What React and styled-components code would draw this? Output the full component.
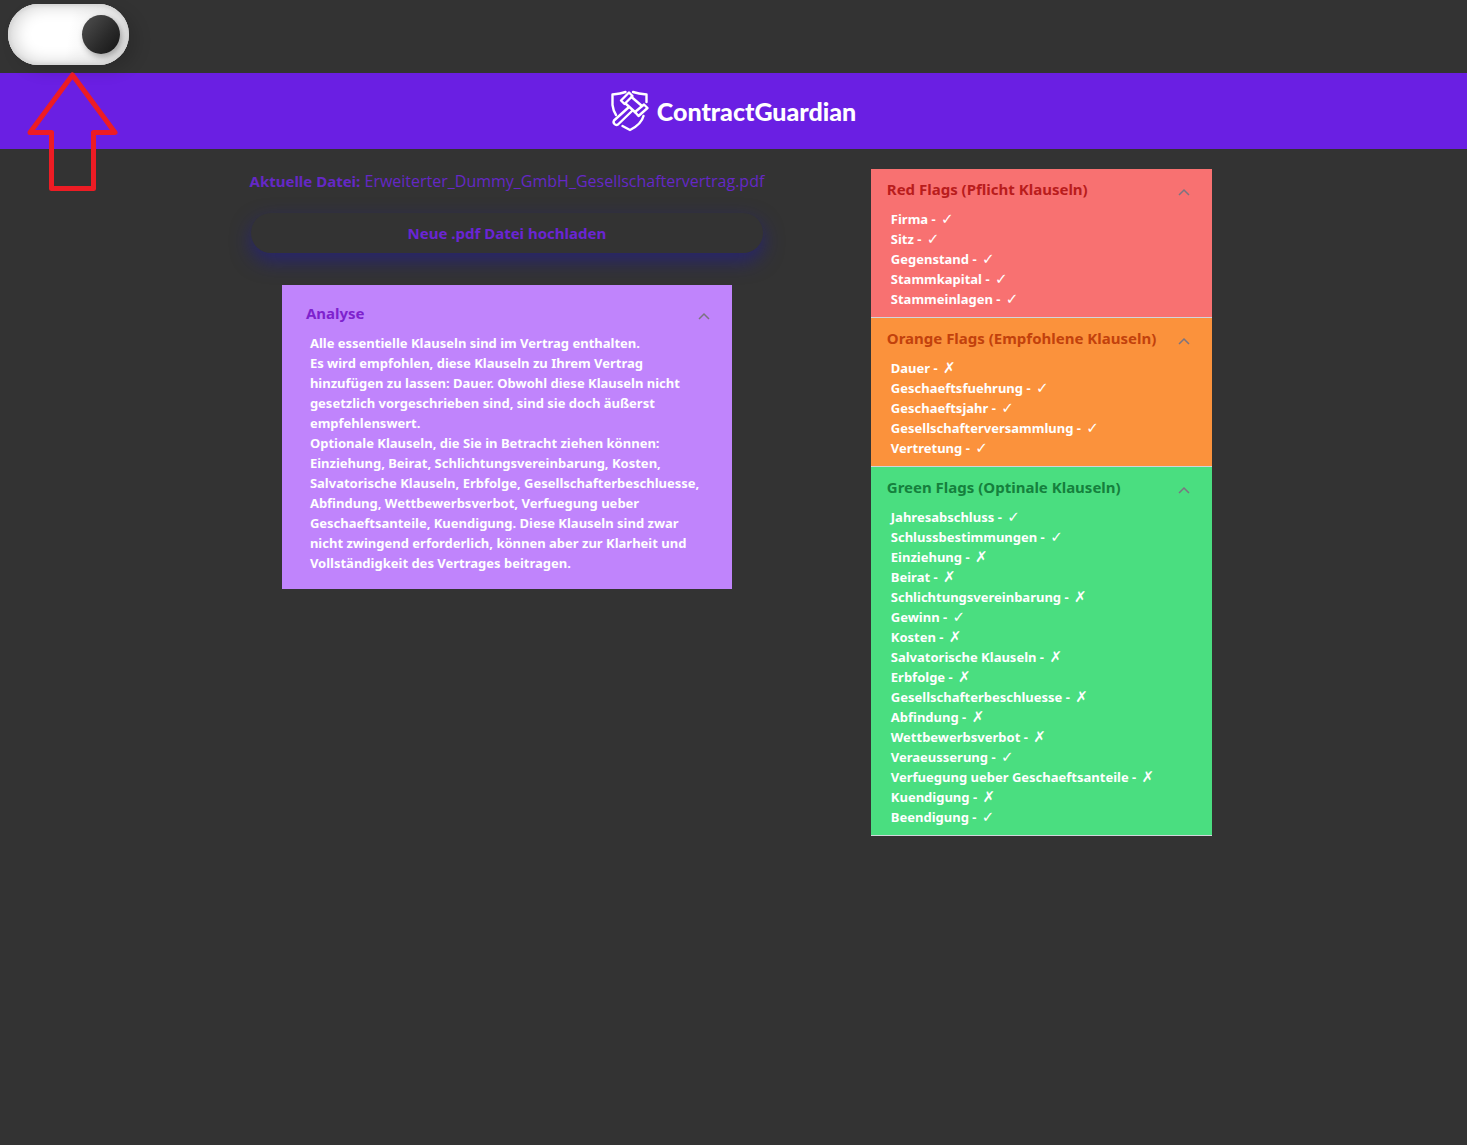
import React, { useState } from "react";
import styled, { createGlobalStyle } from "styled-components";

const GlobalStyle = createGlobalStyle`
  * { box-sizing: border-box; }
  body {
    margin: 0;
    background: #333333;
    font-family: "Noto Sans", "Open Sans", "DejaVu Sans", sans-serif;
  }
`;

const Page = styled.div`
  position: relative;
  min-height: 100vh;
  background: #333333;
`;

const TopBar = styled.div`
  display: flex;
  height: 73px;
  padding: 4px 8px;
`;

const Switch = styled.label`
  position: relative;
  display: block;
  width: 121px;
  height: 61px;
  border-radius: 31px;
  cursor: pointer;
  background: linear-gradient(100deg, #ffffff 50%, #e2e2e2 100%);
  box-shadow:
    inset 0 0 3px 2px #d6d6d6,
    inset 4px 0 16px 3px #d8d8d8,
    8px 6px 16px rgba(0, 0, 0, 0.14);
`;

const SwitchInput = styled.input`
  appearance: none;
  position: absolute;
  top: 11px;
  left: ${(p) => (p.checked ? "74px" : "10px")};
  width: 38px;
  height: 39px;
  margin: 0;
  border-radius: 50%;
  cursor: pointer;
  background: linear-gradient(130deg, #444444 20%, #2a2a2a 60%, #141414 100%);
  box-shadow: 2px 3px 6px rgba(0, 0, 0, 0.3);
`;

const Pointer = styled.svg`
  position: absolute;
  top: 70px;
  left: 26px;
  pointer-events: none;
`;

const Header = styled.header`
  display: flex;
  align-items: center;
  justify-content: center;
  gap: 8px;
  height: 76px;
  background: #6a1fe3;
  color: #ffffff;
`;

const Brand = styled.span`
  font-family: Lato, "Open Sans", sans-serif;
  font-size: 25px;
  font-weight: 900;
  line-height: 32px;
`;

const Main = styled.main`
  display: grid;
  grid-template-columns: minmax(0, 3fr) minmax(0, 2fr);
  gap: 108px;
  align-items: start;
  max-width: 965px;
  margin: 0 auto;
  padding: 20px 4px 20px 0;
`;

const Left = styled.section`
  display: flex;
  flex-direction: column;
  align-items: center;
`;

const FileName = styled.p`
  margin: 0;
  font-family: "Open Sans", sans-serif;
  font-size: 16px;
  line-height: 24px;
  color: #6528c6;
  white-space: nowrap;
`;

const FileLabel = styled.b`
  font-family: "Noto Sans", sans-serif;
  font-size: 15px;
`;

const Upload = styled.button`
  width: 100%;
  height: 40px;
  margin: 20px 0 32px;
  border: 0;
  border-radius: 20px;
  background: #333333;
  color: #6a25d4;
  font: inherit;
  font-size: 15px;
  font-weight: 700;
  cursor: pointer;
  box-shadow: 0 8px 20px rgba(30, 24, 160, 0.55);
`;

const AnalysisCard = styled.div`
  width: 450px;
  max-width: 100%;
  padding: 8px 0 8px 8px;
  background: #c084fc;
`;

const Right = styled.section`
  display: flex;
  flex-direction: column;
`;

const FlagCard = styled.div`
  background: ${(p) => p.$bg};
  border-bottom: 1px solid #d1d5db;
`;

const Toggle = styled.button`
  display: flex;
  align-items: center;
  justify-content: space-between;
  width: 100%;
  height: 40px;
  padding: 0 16px;
  border: 0;
  background: none;
  color: ${(p) => p.$color};
  font: inherit;
  font-size: 15px;
  font-weight: 700;
  line-height: 24px;
  text-align: left;
  white-space: nowrap;
  cursor: pointer;
`;

const Body = styled.div`
  padding: 0 20px 8px;
  color: #ffffff;
  font-size: 13px;
  font-weight: 700;
  line-height: 20px;
`;

const Paragraph = styled.p`
  margin: 0;
`;

const List = styled.ul`
  margin: 0;
  padding: 0;
  list-style: none;
`;

const Item = styled.li`
  height: 20px;
  white-space: nowrap;
`;

const Mark = styled.span`
  margin-left: 2px;
  font-family: "DejaVu Sans", sans-serif;
  font-size: 15px;
  font-weight: 400;
`;

function Chevron() {
  return (
    <svg width="24" height="24" viewBox="0 0 24 24" fill="none" stroke="#7b7480" strokeWidth="1.5" aria-hidden="true">
      <path d="M7 18 12 13 17 18" />
    </svg>
  );
}

function Logo() {
  return (
    <svg width="38" height="42" viewBox="0 0 38 42" fill="none" stroke="#ffffff" strokeWidth="2.4" strokeLinejoin="round" strokeLinecap="round" aria-hidden="true">
      <path d="M14.500 2C10 3.500 6 4 1.500 4.500V15C2 19 3 22 5 25" />
      <path d="M22 2C27 3.500 31 4 35.500 4.500V12" />
      <path d="M11.500 36 19 40C26 36.500 31 32 32.500 26" />
      <path d="M10 10.500 18 2.500 21.500 6 13.500 14Z" />
      <path d="M24 22 33 14.500 36.500 18 27.500 26Z" />
      <path d="M20.500 7 31 16M14.500 13.500 24.500 22.500" />
      <path d="M18 17 3 30.500C1.500 33 4.500 36 7 34.500L21.500 20.500" />
    </svg>
  );
}

function Accordion({ title, color, children }) {
  const [open, setOpen] = useState(true);
  return (
    <>
      <Toggle type="button" $color={color} aria-expanded={open} onClick={() => setOpen(!open)}>
        {title}
        <Chevron />
      </Toggle>
      {open && <Body>{children}</Body>}
    </>
  );
}

const groups = [
  {
    title: "Red Flags (Pflicht Klauseln)",
    bg: "#f87171",
    color: "#b91c1c",
    items: [["Firma", 1], ["Sitz", 1], ["Gegenstand", 1], ["Stammkapital", 1], ["Stammeinlagen", 1]],
  },
  {
    title: "Orange Flags (Empfohlene Klauseln)",
    bg: "#fb923c",
    color: "#c2410c",
    items: [["Dauer", 0], ["Geschaeftsfuehrung", 1], ["Geschaeftsjahr", 1], ["Gesellschafterversammlung", 1], ["Vertretung", 1]],
  },
  {
    title: "Green Flags (Optinale Klauseln)",
    bg: "#4ade80",
    color: "#15803d",
    items: [
      ["Jahresabschluss", 1], ["Schlussbestimmungen", 1], ["Einziehung", 0], ["Beirat", 0],
      ["Schlichtungsvereinbarung", 0], ["Gewinn", 1], ["Kosten", 0], ["Salvatorische Klauseln", 0],
      ["Erbfolge", 0], ["Gesellschafterbeschluesse", 0], ["Abfindung", 0], ["Wettbewerbsverbot", 0],
      ["Veraeusserung", 1], ["Verfuegung ueber Geschaeftsanteile", 0], ["Kuendigung", 0], ["Beendigung", 1],
    ],
  },
];

export default function App() {
  const [dark, setDark] = useState(true);
  return (
    <Page>
      <GlobalStyle />
      <TopBar>
        <Switch>
          <SwitchInput type="checkbox" aria-label="Dark Mode" checked={dark} onChange={() => setDark(!dark)} />
        </Switch>
      </TopBar>
      <Header>
        <Logo />
        <Brand>ContractGuardian</Brand>
      </Header>
      <Main>
        <Left>
          <FileName>
            <FileLabel>Aktuelle Datei:</FileLabel> Erweiterter_Dummy_GmbH_Gesellschaftervertrag.pdf
          </FileName>
          <Upload type="button">Neue .pdf Datei hochladen</Upload>
          <AnalysisCard>
            <Accordion title="Analyse" color="#7e22ce">
              <Paragraph>Alle essentielle Klauseln sind im Vertrag enthalten.</Paragraph>
              <Paragraph>
                Es wird empfohlen, diese Klauseln zu Ihrem Vertrag hinzufügen zu lassen: Dauer. Obwohl diese
                Klauseln nicht gesetzlich vorgeschrieben sind, sind sie doch äußerst empfehlenswert.
              </Paragraph>
              <Paragraph>
                Optionale Klauseln, die Sie in Betracht ziehen können: Einziehung, Beirat,
                Schlichtungsvereinbarung, Kosten, Salvatorische Klauseln, Erbfolge, Gesellschafterbeschluesse,
                Abfindung, Wettbewerbsverbot, Verfuegung ueber Geschaeftsanteile, Kuendigung. Diese Klauseln
                sind zwar nicht zwingend erforderlich, können aber zur Klarheit und Vollständigkeit des
                Vertrages beitragen.
              </Paragraph>
            </Accordion>
          </AnalysisCard>
        </Left>
        <Right>
          {groups.map((g) => (
            <FlagCard key={g.title} $bg={g.bg}>
              <Accordion title={g.title} color={g.color}>
                <List>
                  {g.items.map(([name, ok]) => (
                    <Item key={name}>
                      {name} - <Mark>{ok ? "✓" : "✗"}</Mark>
                    </Item>
                  ))}
                </List>
              </Accordion>
            </FlagCard>
          ))}
        </Right>
      </Main>
      <Pointer width="94" height="122" viewBox="0 0 94 122" fill="none" stroke="#ed1c24" strokeWidth="5" strokeLinejoin="round" aria-hidden="true">
        <path d="M46.500 5 89 62.500H67.500V118.500H25.500V62.500H4Z" />
      </Pointer>
    </Page>
  );
}
